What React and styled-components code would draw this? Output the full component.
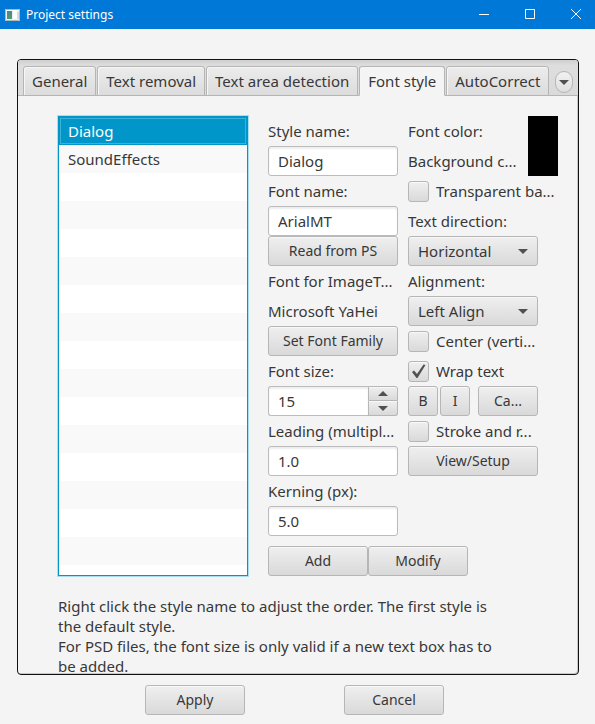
import React, { useState } from "react";
import styled, { createGlobalStyle, css } from "styled-components";

const GlobalStyle = createGlobalStyle`
  *, *::before, *::after { box-sizing: border-box; }
  body {
    margin: 0;
    background: #f4f4f4;
    color: #383838;
    font: 15px/20px "Noto Sans", "Open Sans", sans-serif;
  }
  button, input, select { font: inherit; color: inherit; margin: 0; }
`;

const Window = styled.div`
  display: flex;
  flex-direction: column;
  height: 100vh;
`;

const TitleBar = styled.header`
  display: flex;
  align-items: center;
  flex: none;
  height: 29px;
  padding-left: 5px;
  background: #0078d7;
  color: #fff;
`;

const Title = styled.h1`
  flex: 1;
  margin: 0 0 0 6px;
  font-size: 12px;
  line-height: 16px;
  font-weight: 400;
`;

const WindowButton = styled.button`
  display: grid;
  place-items: center;
  width: 46px;
  height: 29px;
  padding: 0 0 2px;
  border: 0;
  background: none;
  &:last-child { width: 42px; padding-left: 4px; }
`;

const raised = css`
  border: 1px solid #b6b6b6;
  border-radius: 3px;
  background: linear-gradient(#efefef, #d9d9d9);
  box-shadow: inset 0 1px 0 #f8f8f8;
`;

const Frame = styled.main`
  display: flex;
  flex-direction: column;
  flex: 1;
  min-height: 0;
  margin: 30px 16px 0 17px;
  border: 1px solid #111;
  border-radius: 4px;
  overflow: hidden;
  box-shadow: inset -1px -1px 0 #c8c8c8;
`;

const TabBar = styled.div`
  display: flex;
  align-items: flex-end;
  gap: 1px;
  flex: none;
  height: 36px;
  padding-left: 5px;
  background: linear-gradient(#cfcfcf, #dedede 6px, #dadada);
  box-shadow: inset 0 -1px 0 #b5b5b5;
`;

const Tab = styled.button`
  flex: none;
  height: 30px;
  padding: 0 8px;
  white-space: nowrap;
  border: 1px solid #b5b5b5;
  border-radius: 3px 3px 0 0;
  background: linear-gradient(#ececec, #dcdcdc);
  box-shadow: inset 1px 1px 0 #f6f6f6;
  ${(p) =>
    p["aria-selected"] &&
    css`
      border-bottom-color: #f4f4f4;
      background: #f4f4f4;
    `}
`;

const TabMenu = styled.button`
  display: grid;
  place-items: center;
  flex: none;
  align-self: center;
  width: 18px;
  height: 22px;
  margin: 8px 5px 0 auto;
  padding: 0;
  border: 1px solid #b5b5b5;
  border-radius: 9px;
  background: linear-gradient(#f2f2f2, #dedede);
`;

const Panel = styled.div`
  flex: 1;
  min-height: 0;
  margin-right: 1px;
  margin-bottom: 1px;
  padding: 20px 19px 0 40px;
`;

const Form = styled.form`
  display: grid;
  grid-template-columns: minmax(120px, 1fr) 130px 150px;
  grid-template-rows: auto 30px;
  gap: 10px;
`;

const StyleList = styled.ul`
  grid-row: 1 / 3;
  margin: 0 10px 0 0;
  padding: 0;
  list-style: none;
  border: 1px solid #0096c9;
  box-shadow: 0 0 0 1px #a9def0;
  background: repeating-linear-gradient(#fff 0 28px, #f9f9f9 28px 56px);
`;

const StyleItem = styled.li`
  height: 28px;
  padding: 4px 9px;
  ${(p) =>
    p["aria-selected"] &&
    css`
      background: #0096c9;
      color: #fff;
      box-shadow: inset 0 0 0 1px #0096c9, inset 0 0 0 2px #3db2d9;
    `}
`;

const Column = styled.div`
  display: grid;
  grid-auto-rows: 30px;
  align-content: start;
  grid-template-columns: 130px;
`;

const Label = styled.label`
  line-height: 30px;
  white-space: nowrap;
`;

const Value = styled.output`
  line-height: 30px;
  white-space: nowrap;
`;

const TextField = styled.input`
  width: 100%;
  min-width: 0;
  height: 30px;
  padding: 0 9px;
  border: 1px solid #bcbcbc;
  border-radius: 3px;
  background: #fff;
  box-shadow: inset 0 2px 2px #eee;
`;

const Button = styled.button`
  ${raised}
  height: 30px;
  padding: 0;
  text-align: center;
  white-space: nowrap;
  font-size: 14px;
  width: ${(p) => p.$width || "100%"};
`;

const Spinner = styled.div`
  display: grid;
  grid-template-columns: 1fr 30px;
  grid-template-rows: 15px 15px;
  ${TextField} {
    grid-row: 1 / 3;
    border-right: 0;
    border-radius: 3px 0 0 3px;
  }
`;

const Step = styled.button`
  ${raised}
  display: grid;
  place-items: center;
  padding: 0;
  border-radius: ${(p) => (p.$up ? "0 3px 0 0" : "0 0 3px 0")};
  ${(p) => !p.$up && "border-top: 0;"}
`;

const ColorRow = styled.div`
  grid-row: span 2;
  display: grid;
  width: 150px;
  grid-template-columns: 1fr 30px;
  grid-template-rows: 30px 30px;
`;

const Swatch = styled.button`
  grid-area: 1 / 2 / 3 / 3;
  padding: 0;
  border: 0;
  background: #000;
`;

const SelectBox = styled.div`
  display: grid;
  align-items: center;
  > * { grid-area: 1 / 1; }
  svg { justify-self: end; margin-right: 10px; pointer-events: none; }
`;

const Select = styled.select`
  ${raised}
  appearance: none;
  width: 100%;
  height: 30px;
  padding: 0 26px 0 9px;
`;

const CheckRow = styled.label`
  display: grid;
  grid-template-columns: 21px auto;
  align-items: center;
  column-gap: 7px;
  white-space: nowrap;
  svg { grid-area: 1 / 1; justify-self: center; pointer-events: none; display: none; }
  input:checked + svg { display: block; }
`;

const CheckInput = styled.input`
  ${raised}
  grid-area: 1 / 1;
  appearance: none;
  width: 21px;
  height: 21px;
`;

const StyleButtons = styled.div`
  display: grid;
  grid-template-columns: 30px 30px 60px;
  column-gap: 2px;
  ${Button}:last-child { margin-left: 6px; width: 60px; }
`;

const Actions = styled.div`
  grid-column: 2 / 4;
  display: flex;
`;

const Help = styled.p`
  max-width: 450px;
  margin: 20px 0 0;
  white-space: pre-line;
`;

const Footer = styled.footer`
  display: flex;
  justify-content: center;
  flex: none;
  gap: 99px;
  padding: 10px 6px 9px 0;
`;

const Arrow = ({ up }) => (
  <svg width="10" height="5" viewBox="0 0 10 5" aria-hidden="true">
    <path d={up ? "M0 5 5 0l5 5z" : "M0 0h10L5 5z"} fill="#505050" />
  </svg>
);

const AppIcon = () => (
  <svg width="15" height="12" viewBox="0 0 15 12" aria-hidden="true">
    <defs>
      <linearGradient id="pane" x2="0.4" y2="1">
        <stop stopColor="#547ba4" />
        <stop offset="1" stopColor="#45a067" />
      </linearGradient>
    </defs>
    <path d="M0 0h15v12H0z" fill="#e9eef0" />
    <path d="M.5 .5h14v11H.5z" fill="none" stroke="#aeb9bc" />
    <path d="M1 1h13v1H1z" fill="#fff" />
    <path d="M2 2h5v8H2z" fill="url(#pane)" />
    <path d="M8 2h4v8H8z" fill="#fff" />
    <path d="M12 3h2v7h-2z" fill="#d5dcdc" />
  </svg>
);

const Check = ({ id, children, ...rest }) => (
  <CheckRow htmlFor={id}>
    <CheckInput id={id} type="checkbox" {...rest} />
    <svg width="15" height="15" viewBox="0 0 15 15" aria-hidden="true">
      <path d="M1 8 3 6.5 6 10 12.5 .5 14.5 1 6.5 14H5.5z" fill="#505050" />
    </svg>
    <span>{children}</span>
  </CheckRow>
);

const Choice = ({ id, value }) => (
  <SelectBox>
    <Select id={id} defaultValue={value}>
      <option>{value}</option>
    </Select>
    <Arrow />
  </SelectBox>
);

const TABS = ["General", "Text removal", "Text area detection", "Font style", "AutoCorrect"];
const STYLES = ["Dialog", "SoundEffects"];

export default function App() {
  const [tab, setTab] = useState("Font style");
  const [selected, setSelected] = useState("Dialog");
  const [size, setSize] = useState(15);

  return (
    <Window>
      <GlobalStyle />
      <TitleBar>
        <AppIcon />
        <Title>Project settings</Title>
        <WindowButton aria-label="Minimize">
          <svg width="10" height="10" stroke="#fff"><path d="M0 5.5h10" /></svg>
        </WindowButton>
        <WindowButton aria-label="Maximize">
          <svg width="10" height="10" stroke="#fff" fill="none"><path d="M.5 .5h9v9h-9z" /></svg>
        </WindowButton>
        <WindowButton aria-label="Close">
          <svg width="10" height="10" stroke="#fff"><path d="M0 0 10 10M10 0 0 10" /></svg>
        </WindowButton>
      </TitleBar>

      <Frame>
        <TabBar role="tablist">
          {TABS.map((name) => (
            <Tab key={name} role="tab" aria-selected={name === tab} onClick={() => setTab(name)}>
              {name}
            </Tab>
          ))}
          <TabMenu aria-label="More tabs"><Arrow /></TabMenu>
        </TabBar>

        <Panel role="tabpanel">
          <Form onSubmit={(e) => e.preventDefault()}>
            <StyleList role="listbox" aria-label="Styles">
              {STYLES.map((name) => (
                <StyleItem
                  key={name}
                  role="option"
                  aria-selected={name === selected}
                  onClick={() => setSelected(name)}
                >
                  {name}
                </StyleItem>
              ))}
            </StyleList>

            <Column>
              <Label htmlFor="style-name">Style name:</Label>
              <TextField id="style-name" defaultValue="Dialog" />
              <Label htmlFor="font-name">Font name:</Label>
              <TextField id="font-name" defaultValue="ArialMT" />
              <Button type="button">Read from PS</Button>
              <Label htmlFor="family">Font for ImageT...</Label>
              <Value id="family">Microsoft YaHei</Value>
              <Button type="button">Set Font Family</Button>
              <Label htmlFor="font-size">Font size:</Label>
              <Spinner>
                <TextField id="font-size" value={size} onChange={(e) => setSize(e.target.value)} />
                <Step $up type="button" aria-label="Increase" onClick={() => setSize(+size + 1)}>
                  <Arrow up />
                </Step>
                <Step type="button" aria-label="Decrease" onClick={() => setSize(+size - 1)}>
                  <Arrow />
                </Step>
              </Spinner>
              <Label htmlFor="leading">Leading (multipl...</Label>
              <TextField id="leading" defaultValue="1.0" />
              <Label htmlFor="kerning">Kerning (px):</Label>
              <TextField id="kerning" defaultValue="5.0" />
            </Column>

            <Column>
              <ColorRow>
                <Label htmlFor="color">Font color:</Label>
                <Label htmlFor="color">Background c...</Label>
                <Swatch id="color" type="button" />
              </ColorRow>
              <Check id="transparent">Transparent ba...</Check>
              <Label htmlFor="direction">Text direction:</Label>
              <Choice id="direction" value="Horizontal" />
              <Label htmlFor="align">Alignment:</Label>
              <Choice id="align" value="Left Align" />
              <Check id="center">Center (verti...</Check>
              <Check id="wrap" defaultChecked>Wrap text</Check>
              <StyleButtons>
                <Button type="button">B</Button>
                <Button type="button">I</Button>
                <Button type="button">Ca...</Button>
              </StyleButtons>
              <Check id="stroke">Stroke and r...</Check>
              <Button type="button">View/Setup</Button>
            </Column>

            <Actions>
              <Button $width="100px" type="button">Add</Button>
              <Button $width="100px" type="button">Modify</Button>
            </Actions>
          </Form>

          <Help>
            {"Right click the style name to adjust the order. The first style is the default style.\nFor PSD files, the font size is only valid if a new text box has to be added."}
          </Help>
        </Panel>
      </Frame>

      <Footer>
        <Button $width="100px" type="button">Apply</Button>
        <Button $width="100px" type="button">Cancel</Button>
      </Footer>
    </Window>
  );
}
